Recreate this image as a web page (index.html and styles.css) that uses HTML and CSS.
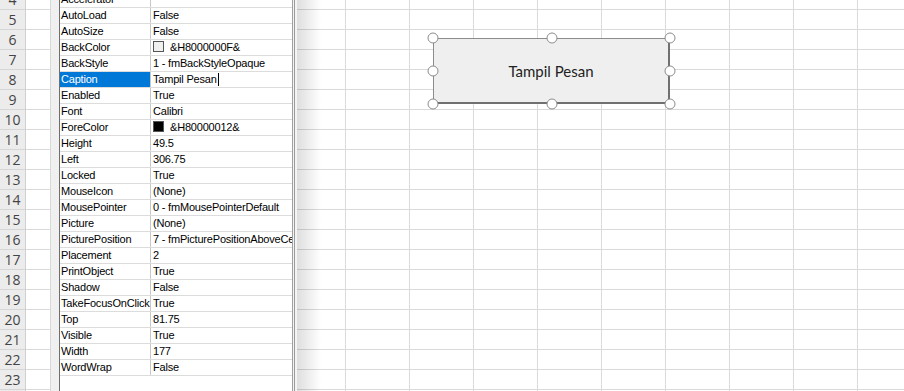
FILE: index.html
```html
<!DOCTYPE html>
<html lang="id">
<head>
  <meta charset="UTF-8" />
  <title>Properties - CommandButton</title>
  <link rel="stylesheet" href="styles.css">
</head>
<body>

  <div class="hoja">

    <!-- nomor baris -->
    <div class="encabezados">
      <div class="num primero">4</div>
      <div class="num">5</div>
      <div class="num">6</div>
      <div class="num">7</div>
      <div class="num">8</div>
      <div class="num">9</div>
      <div class="num">10</div>
      <div class="num">11</div>
      <div class="num">12</div>
      <div class="num">13</div>
      <div class="num">14</div>
      <div class="num">15</div>
      <div class="num">16</div>
      <div class="num">17</div>
      <div class="num">18</div>
      <div class="num">19</div>
      <div class="num">20</div>
      <div class="num">21</div>
      <div class="num">22</div>
      <div class="num">23</div>
      <div class="num">24</div>
    </div>

    <div class="col-a"></div>

    <!-- jendela Properties -->
    <div class="ventana">
      <div class="marco-izq"></div>
      <div class="lista">
        <div class="filas">
          <div class="prop"><span class="nombre">Accelerator</span><span class="valor"></span></div>
          <div class="prop"><span class="nombre">AutoLoad</span><span class="valor">False</span></div>
          <div class="prop"><span class="nombre">AutoSize</span><span class="valor">False</span></div>
          <div class="prop"><span class="nombre">BackColor</span><span class="valor"><span class="muestra gris"></span>&amp;H8000000F&amp;</span></div>
          <div class="prop"><span class="nombre">BackStyle</span><span class="valor">1 - fmBackStyleOpaque</span></div>
          <div class="prop activa"><span class="nombre">Caption</span><span class="valor">Tampil Pesan<span class="cursor"></span></span></div>
          <div class="prop"><span class="nombre">Enabled</span><span class="valor">True</span></div>
          <div class="prop"><span class="nombre">Font</span><span class="valor">Calibri</span></div>
          <div class="prop"><span class="nombre">ForeColor</span><span class="valor"><span class="muestra negro"></span>&amp;H80000012&amp;</span></div>
          <div class="prop"><span class="nombre">Height</span><span class="valor">49.5</span></div>
          <div class="prop"><span class="nombre">Left</span><span class="valor">306.75</span></div>
          <div class="prop"><span class="nombre">Locked</span><span class="valor">True</span></div>
          <div class="prop"><span class="nombre">MouseIcon</span><span class="valor">(None)</span></div>
          <div class="prop"><span class="nombre">MousePointer</span><span class="valor">0 - fmMousePointerDefault</span></div>
          <div class="prop"><span class="nombre">Picture</span><span class="valor">(None)</span></div>
          <div class="prop"><span class="nombre">PicturePosition</span><span class="valor">7 - fmPicturePositionAboveCenter</span></div>
          <div class="prop"><span class="nombre">Placement</span><span class="valor">2</span></div>
          <div class="prop"><span class="nombre">PrintObject</span><span class="valor">True</span></div>
          <div class="prop"><span class="nombre">Shadow</span><span class="valor">False</span></div>
          <div class="prop"><span class="nombre">TakeFocusOnClick</span><span class="valor">True</span></div>
          <div class="prop"><span class="nombre">Top</span><span class="valor">81.75</span></div>
          <div class="prop"><span class="nombre">Visible</span><span class="valor">True</span></div>
          <div class="prop"><span class="nombre">Width</span><span class="valor">177</span></div>
          <div class="prop"><span class="nombre">WordWrap</span><span class="valor">False</span></div>
        </div>
      </div>
      <div class="marco-der"></div>
    </div>

    <!-- area sel -->
    <div class="celdas">
      <div class="seleccion">
        <div class="boton">Tampil Pesan</div>
        <span class="asa arriba izq"></span>
        <span class="asa arriba centro"></span>
        <span class="asa arriba der"></span>
        <span class="asa medio izq"></span>
        <span class="asa medio der"></span>
        <span class="asa abajo izq"></span>
        <span class="asa abajo centro"></span>
        <span class="asa abajo der"></span>
      </div>
    </div>

  </div>

</body>
</html>
```

FILE: styles.css
```css
body {
  margin: 0;
  background-color: #fff;
  font-family: "Liberation Sans", Arial, sans-serif;
  overflow: hidden;
}

.hoja {
  display: flex;
  height: 391px;
  overflow: hidden;
}

/* nomor baris */
.encabezados {
  width: 25px;
  flex: none;
  background-color: #ececec;
  border-right: 1px solid #cfcfcf;
  overflow: hidden;
}

.num {
  height: 19px;
  line-height: 20px;
  border-bottom: 1px solid #d6d6d6;
  text-align: center;
  font-family: "Open Sans", sans-serif;
  font-size: 14px;
  color: #444;
}

.num.primero {
  margin-top: -10px;
}

.col-a {
  width: 24px;
  flex: none;
  background: repeating-linear-gradient(to bottom, transparent 0 9px, #dadada 9px 10px, transparent 10px 20px);
}

/* jendela properties */
.ventana {
  width: 247px;
  flex: none;
  display: flex;
  background-color: #f0f0f0;
}

.marco-izq {
  width: 8px;
  border-left: 1px solid #d8d8d8;
}

.lista {
  width: 232px;
  background-color: #fff;
  border-left: 1px solid #6f6f6f;
  border-right: 1px solid #a0a0a0;
  overflow: hidden;
}

.filas {
  margin-top: -8px;
}

.prop {
  display: flex;
  height: 15px;
  line-height: 15px;
  border-bottom: 1px solid #dcdcdc;
  font-size: 11px;
  letter-spacing: -0.2px;
  color: #000;
  white-space: nowrap;
}

.nombre {
  width: 91px;
  flex: none;
  box-sizing: border-box;
  padding-left: 1px;
  border-right: 1px solid #c8c8c8;
  overflow: hidden;
}

.valor {
  flex: 1;
  padding-left: 2px;
  overflow: hidden;
}

.prop.activa .nombre {
  background-color: #0078d7;
  color: #fff;
}

.muestra {
  display: inline-block;
  width: 9px;
  height: 9px;
  border: 1px solid #555;
  margin-right: 6px;
  vertical-align: -1px;
}

.muestra.gris {
  background-color: #f0f0f0;
}

.muestra.negro {
  background-color: #000;
}

.cursor {
  display: inline-block;
  width: 1px;
  height: 13px;
  margin-left: 1px;
  background-color: #000;
  vertical-align: -3px;
}

.marco-der {
  width: 4px;
  background: linear-gradient(to right, #f4f4f4 0 1px, #9a9a9a 1px 2px, #f4f4f4 2px);
}

/* sel lembar kerja */
.celdas {
  flex: 1;
  position: relative;
  background:
    repeating-linear-gradient(to right, transparent 0 48px, #dadada 48px 49px, transparent 49px 64px),
    repeating-linear-gradient(to bottom, transparent 0 9px, #dadada 9px 10px, transparent 10px 20px);
}

.celdas::before {
  content: "";
  position: absolute;
  top: 0; left: 0;
  width: 24px; height: 100%;
  background: linear-gradient(to right, rgba(0,0,0,0.13), rgba(0,0,0,0));
}

.seleccion {
  position: absolute;
  left: 136px;
  top: 38px;
  width: 237px;
  height: 66px;
}

.boton {
  width: 100%;
  height: 100%;
  box-sizing: border-box;
  display: flex;
  align-items: center;
  justify-content: center;
  background-color: #efefef;
  border: 1px solid #8c8c8c;
  border-right: 2px solid #707070;
  border-bottom: 2px solid #707070;
  font-family: Lato, sans-serif;
  font-size: 15px;
  color: #222;
}

.asa {
  position: absolute;
  width: 11px;
  height: 11px;
  box-sizing: border-box;
  border: 1.5px solid #8c8c8c;
  border-radius: 50%;
  background-color: #fff;
  transform: translate(-50%, -50%);
}

.asa.arriba { top: 0; }
.asa.medio { top: 50%; }
.asa.abajo { top: 100%; }
.asa.izq { left: 0; }
.asa.centro { left: 50%; }
.asa.der { left: 100%; }
```
